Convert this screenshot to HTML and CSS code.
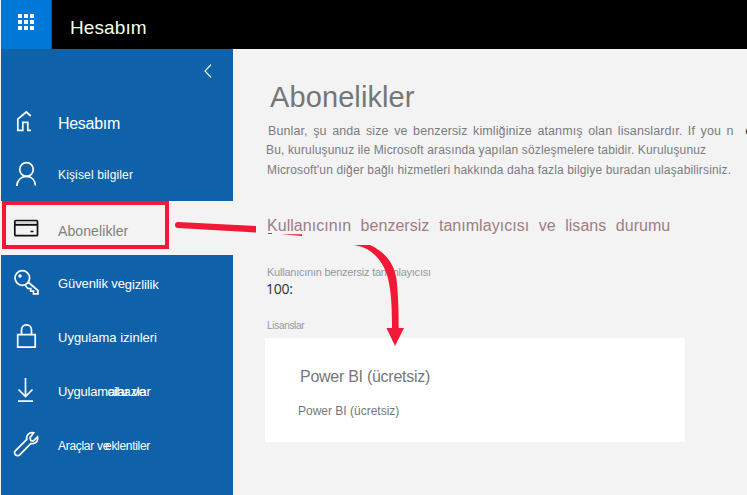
FILE: index.html
```html
<!DOCTYPE html>
<html lang="tr">
<head>
<meta charset="utf-8">
<title>Hesabım</title>
<link rel="stylesheet" href="styles.css">
</head>
<body>
<div class="app">
  <header class="topbar">
    <div class="launcher">
      <svg width="16" height="16" viewBox="0 0 16 16" fill="#fff"><path d="M0 0h4v4H0zM6 0h4v4H6zM12 0h4v4h-4zM0 6h4v4H0zM6 6h4v4H6zM12 6h4v4h-4zM0 12h4v4H0zM6 12h4v4H6zM12 12h4v4h-4z"/></svg>
    </div>
    <span class="brand">Hesabım</span>
  </header>
  <div class="body">
    <nav class="sidebar">
      <div class="collapse">
        <svg width="8" height="14" viewBox="0 0 8 14"><path d="M7 .7 1 7l6 6.3"/></svg>
      </div>
      <a class="item">
        <svg class="icon" viewBox="0 0 26 26"><path d="M17.800 9 13.300 5 4.800 12.200v11.200h5v-8h5v8h3.200"/></svg>
        <span class="label home">Hesabım</span>
      </a>
      <a class="item">
        <svg class="icon" viewBox="0 0 26 26"><circle cx="13.500" cy="8.500" r="6.800"/><path d="M3.700 25c.4-5.700 4.500-9.700 9.800-9.700s8.500 4 8.900 9.200"/></svg>
        <span class="label person">Kişisel bilgiler</span>
      </a>
      <a class="item selected">
        <svg class="icon" viewBox="0 0 26 26"><path d="M2 6.500h22v3H2z" fill="#d8d3d6" stroke="none"/><rect x="1.800" y="5.500" width="22.700" height="15.200" rx="1"/><path d="M2 9.800h22.500M17.500 16.500h3"/></svg>
        <span class="label subs">Abonelikler</span>
      </a>
      <a class="item">
        <svg class="icon" viewBox="0 0 26 26"><circle cx="9.300" cy="9" r="7.300"/><circle class="dot" cx="7" cy="7" r="1.700"/><path d="M15.500 13.500 25 21.500v3.300h-4.500v-2.600h-2.800v-2.700h-2.900l-2.600-3.200"/></svg>
        <span class="label security">Güvenlik ve<span class="low">gizlilik</span></span>
      </a>
      <a class="item">
        <svg class="icon" viewBox="0 0 26 26"><path d="M4.700 11.700h17.500v12.500H4.700zM8.500 11.500V7c0-3 2-5.200 5-5.200s5 2.200 5 5.200v4.500"/></svg>
        <span class="label perms">Uygulama izinleri</span>
      </a>
      <a class="item">
        <svg class="icon" viewBox="0 0 26 26"><path d="M12.500 1v18.500M5.500 12.500l7 7 7-7M5 24.200h15"/></svg>
        <span class="label apps">Uygulamalar ve<span class="over">cihazlar</span></span>
      </a>
      <a class="item">
        <svg class="icon" viewBox="0 0 26 26"><path d="M20.700 1.800c-4-1.200-7.900 2.300-6.900 6.600L2.300 19.800c-1.500 1.600-.6 4.900 2.400 4.900.8 0 1.400-.3 2-.9l11.300-11.300c4.400.9 7.500-2.400 6.500-6.600l-4.300 4.200-2.400-.5-.8-2.900z"/></svg>
        <span class="label tools">Araçlar ve<span class="tight">eklentiler</span></span>
      </a>
    </nav>
    <main class="content">
      <h1>Abonelikler</h1>
      <p class="intro first">Bunlar, şu anda size ve benzersiz kimliğinize atanmış olan lisanslardır. If you n <span class="clip">e</span></p>
      <p class="intro second">Bu, kuruluşunuz ile Microsoft arasında yapılan sözleşmelere tabidir. Kuruluşunuz</p>
      <p class="intro third">Microsoft'un diğer bağlı hizmetleri hakkında daha fazla bilgiye buradan ulaşabilirsiniz.</p>
      <h2>Kullanıcının benzersiz tanımlayıcısı ve lisans durumu</h2>
      <div class="caption user">Kullanıcının benzersiz tanımlayıcısı</div>
      <div class="userid">100<span class="cut">:</span></div>
      <div class="caption lic">Lisanslar</div>
      <section class="card">
        <h3>Power BI (ücretsiz)</h3>
        <p>Power BI (ücretsiz)</p>
      </section>
    </main>
  </div>
  <svg class="callout" width="747" height="495" viewBox="0 0 747 495">
    <rect x="4" y="203" width="163" height="44" fill="none" stroke="#f11935" stroke-width="4"/>
    <path d="M178 222 256 226V232.500L178 228A3 3 0 0 1 178 222z"/>
    <path d="M281 234.300 302 234.200V236z"/>
    <path d="M268 233.200h4v.8h-4z" fill="#6b2430"/>
    <path d="M354 245H370C385 252 394 263 396.500 279 398 292 398.700 308 398.700 328H404L395 346 386.500 328H392C392 311 391.500 296 389 283 385.500 264 374 248 354 245z"/>
  </svg>
</div>
</body>
</html>
```
FILE: styles.css
```css
* { box-sizing: border-box; }
body { margin: 0; background: #f3f3f3; font-family: "Liberation Sans", Arial, sans-serif; }
h1, h2, h3, p { margin: 0; font-weight: 400; }
.app { position: relative; width: 747px; height: 495px; overflow: hidden; padding-left: 1px; white-space: nowrap; }
.topbar { display: flex; height: 49px; background: #000; }
.launcher { width: 51px; padding: 14px 0 0 17px; background: #0078d7; border-right: 1px solid #454545; }
.launcher svg { display: block; }
.brand { padding-left: 18px; line-height: 55px; font-size: 19px; letter-spacing: .1px; color: #f5ffe6; }
.body { display: flex; height: 446px; }
.sidebar { flex: none; width: 232px; background: #0f62aa; color: #fff; }
.collapse { height: 44px; padding: 15px 0 0 203px; }
.collapse svg { display: block; fill: none; stroke: #fff; stroke-width: 1.200; }
.item { display: flex; align-items: center; height: 54px; padding-left: 12px; }
.icon { flex: none; width: 26px; height: 26px; margin-right: 19px; fill: none; stroke: #fff; stroke-width: 1.700; }
.dot { fill: #fff; stroke: none; }
.selected { background: #f3f3f3; color: #808080; }
.selected .icon { stroke: #111; }
.label { font-size: 13px; line-height: 20px; padding-top: 3px; }
.home { padding-top: 8px; font-size: 16px; letter-spacing: -.3px; }
.person { padding-top: 1px; font-size: 12px; letter-spacing: .15px; }
.subs { font-size: 14px; padding-top: 6px; letter-spacing: .1px; }
.security { letter-spacing: -.1px; }
.low { position: relative; top: 1px; }
.apps { letter-spacing: -.2px; }
.over { margin-left: -38px; }
.tools { font-size: 12px; letter-spacing: -.3px; }
.tight { margin-left: -4px; }
.content { flex: 1; min-width: 0; padding: 31px 0 0 32px; color: #7b7b80; }
h1 { height: 41px; padding-left: 5px; font-size: 29px; line-height: 34px; letter-spacing: .1px; color: #767676; }
.intro { height: 19px; font-size: 12px; line-height: 20px; }
.first { padding-left: 3px; font-size: 12.500px; letter-spacing: .1px; word-spacing: 2px; }
.clip { margin-left: 6px; color: #333; }
.second { height: 20px; padding-left: 1px; letter-spacing: .15px; }
.third { padding-left: 2px; height: 55px; letter-spacing: .14px; }
h2 { height: 50px; padding-left: 2px; font-size: 16px; line-height: 22px; letter-spacing: .04px; word-spacing: 5px; color: #a07c86; }
.caption { padding-left: 2px; line-height: 14px; color: #97979e; }
.user { height: 16px; font-size: 11px; letter-spacing: -.24px; }
.userid { display: flex; height: 38px; padding-left: 1px; font: 14px/16px "Open Sans", sans-serif; letter-spacing: -.3px; color: #303030; }
.cut { width: 2px; }
.lic { height: 19px; font-size: 10px; letter-spacing: -.3px; }
.card { width: 420px; height: 104px; padding: 29px 0 0 33px; background: #fff; color: #777; }
h3 { height: 36px; padding-left: 2px; font-size: 16px; line-height: 20px; letter-spacing: -.27px; }
.card p { font-size: 12px; line-height: 16px; }
.callout { position: absolute; left: 0; top: 0; fill: #f11935; }
```
